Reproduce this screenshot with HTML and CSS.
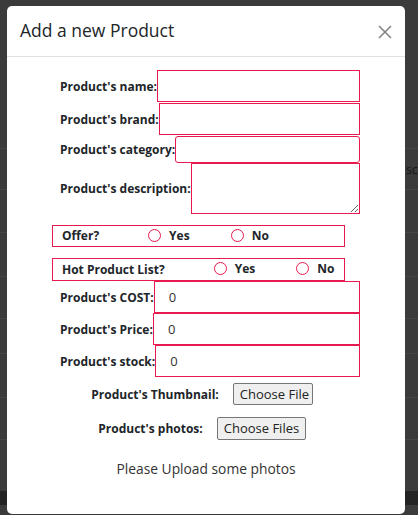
FILE: index.html
```html
<!DOCTYPE html>
<html lang="en">
<head>
<meta charset="utf-8">
<title>Add a new Product</title>
<link rel="stylesheet" href="styles.css">
</head>
<body>
<div class="page">
  <div class="bg-top"></div>
  <div class="bg-row h41"><span class="bg-text">sc</span></div>
  <div class="bg-row h43"></div>
  <div class="bg-row h44"></div>
  <div class="bg-row h42"></div>
  <div class="bg-row h35"></div>
  <div class="bg-row h44"></div>
  <div class="bg-row h42"></div>
  <div class="bg-row h52"></div>
  <div class="bg-band"></div>
</div>

<div class="modal" role="dialog">
  <div class="modal-header">
    <h5 class="modal-title">Add a new Product</h5>
    <button class="close" type="button" aria-label="Close">
      <svg width="14" height="14" viewBox="0 0 14 14"><path d="M1 1 L13 13 M13 1 L1 13" stroke="#808080" stroke-width="1.5" fill="none"/></svg>
    </button>
  </div>
  <div class="modal-body">
    <form class="form">
      <div class="field"><label>Product's name:</label><input class="inp" type="text"></div>
      <div class="field mt1"><label>Product's brand:</label><input class="inp" type="text"></div>
      <div class="field mt1"><label>Product's category:</label><input class="inp inp-cat" type="text"></div>
      <div class="field"><label>Product's description:</label><textarea class="inp inp-desc"></textarea></div>

      <div class="radio-box offer">
        <span class="rlabel">Offer?</span>
        <input class="radio first" type="radio" name="offer"><span class="rtext">Yes</span>
        <input class="radio" type="radio" name="offer"><span class="rtext">No</span>
      </div>
      <div class="radio-box hot">
        <span class="rlabel">Hot Product List?</span>
        <input class="radio first" type="radio" name="hot"><span class="rtext">Yes</span>
        <input class="radio" type="radio" name="hot"><span class="rtext">No</span>
      </div>

      <div class="field"><label>Product's COST:</label><input class="inp" type="number" value="0"></div>
      <div class="field"><label>Product's Price:</label><input class="inp" type="number" value="0"></div>
      <div class="field"><label>Product's stock:</label><input class="inp" type="number" value="0"></div>

      <div class="file-row thumb">
        <label>Product's Thumbnail:</label>
        <span class="filebtn fb-thumb">Choose File</span>
      </div>
      <div class="file-row photos">
        <label>Product's photos:</label>
        <span class="filebtn fb-photos">Choose Files</span>
      </div>
      <p class="note">Please Upload some photos</p>
    </form>
  </div>
</div>
</body>
</html>
```

FILE: styles.css
```css
* { box-sizing: border-box; }
html, body { margin: 0; padding: 0; }
body {
  width: 418px;
  height: 515px;
  overflow: hidden;
  position: relative;
  background: #3b3b3b;
  font-family: "Open Sans", "Liberation Sans", sans-serif;
}

/* dimmed page behind the modal */
.page { display: flex; flex-direction: column; }
.bg-top { height: 148px; }
.bg-row { border-top: 1px solid #474747; display: flex; align-items: center; }
.h41 { height: 41px; }
.h43 { height: 43px; }
.h44 { height: 44px; }
.h42 { height: 42px; }
.h35 { height: 35px; }
.h52 { height: 52px; }
.bg-band { height: 14px; background: #232323; }
.bg-text { padding-left: 406px; font-size: 12px; color: #161616; white-space: nowrap; }

/* modal */
.modal {
  position: absolute;
  left: 7px;
  top: 6px;
  width: 398px;
  height: 508px;
  background: #fff;
  border-radius: 5px;
  overflow: hidden;
}
.modal-header {
  display: flex;
  justify-content: space-between;
  align-items: flex-start;
  height: 51px;
  padding: 12px 13px 14px 13px;
  border-bottom: 1px solid #dee2e6;
}
.modal-title {
  margin: 0;
  font-size: 17.5px;
  font-weight: 400;
  line-height: 24px;
  color: #212529;
}
.close {
  margin-top: 7px;
  padding: 0;
  border: 0;
  background: none;
  width: 14px;
  height: 14px;
  display: flex;
}

.modal-body { padding-top: 13px; }
.form { margin: 0; }

.field {
  display: flex;
  align-items: center;
  margin: 0 45px 0 53px;
}
.mt1 { margin-top: 1px; }
.field label,
.file-row label,
.rlabel,
.rtext {
  font-size: 12px;
  font-weight: 700;
  color: #212529;
  white-space: nowrap;
}
.inp {
  flex: 1;
  min-width: 0;
  height: 32px;
  margin: 0;
  border: 1px solid #e8194f;
  border-radius: 0;
  padding: 0 14px;
  font-family: "Open Sans", "Liberation Sans", sans-serif;
  font-size: 13px;
  color: #333;
  background: #fff;
  outline: none;
}
.inp::-webkit-outer-spin-button,
.inp::-webkit-inner-spin-button { -webkit-appearance: none; margin: 0; }
.inp-cat { height: 27px; border-radius: 3px; }
.inp-desc { height: 51px; resize: vertical; padding: 2px; }

.radio-box {
  display: flex;
  align-items: center;
  margin: 11px 60px 0 45px;
  height: 22px;
  border: 1px solid #e8194f;
  padding-left: 9px;
}
.offer .rlabel, .offer .rtext { margin-top: -2px; }
.offer .radio { margin-top: -1px; }
.radio-box.hot { height: 23px; }
.radio {
  -webkit-appearance: none;
  appearance: none;
  width: 13px;
  height: 13px;
  margin: 0 8px 0 41px;
  border: 1.3px solid #e8194f;
  border-radius: 50%;
  background: #fff;
  flex: none;
}
.radio.first { margin-left: 49px; }
.hot .radio { margin-top: -2px; }
.hot .rtext { margin-top: -3px; }

.file-row {
  display: flex;
  justify-content: center;
  align-items: center;
  gap: 14px;
  padding-right: 8px;
}
.file-row.thumb { margin-top: 6px; }
.file-row.photos { margin-top: 12px; }
.filebtn {
  display: block;
  height: 22px;
  width: 80px;
  padding: 0 6px;
  border: 1px solid #767676;
  border-radius: 2px;
  background: #efefef;
  font-size: 13px;
  line-height: 20px;
  color: #222;
  white-space: nowrap;
  overflow: hidden;
}
.fb-photos { width: 89px; height: 23px; line-height: 21px; }

.note {
  margin: 19px 0 0 0;
  text-align: center;
  font-size: 13.8px;
  color: #333;
}
```
